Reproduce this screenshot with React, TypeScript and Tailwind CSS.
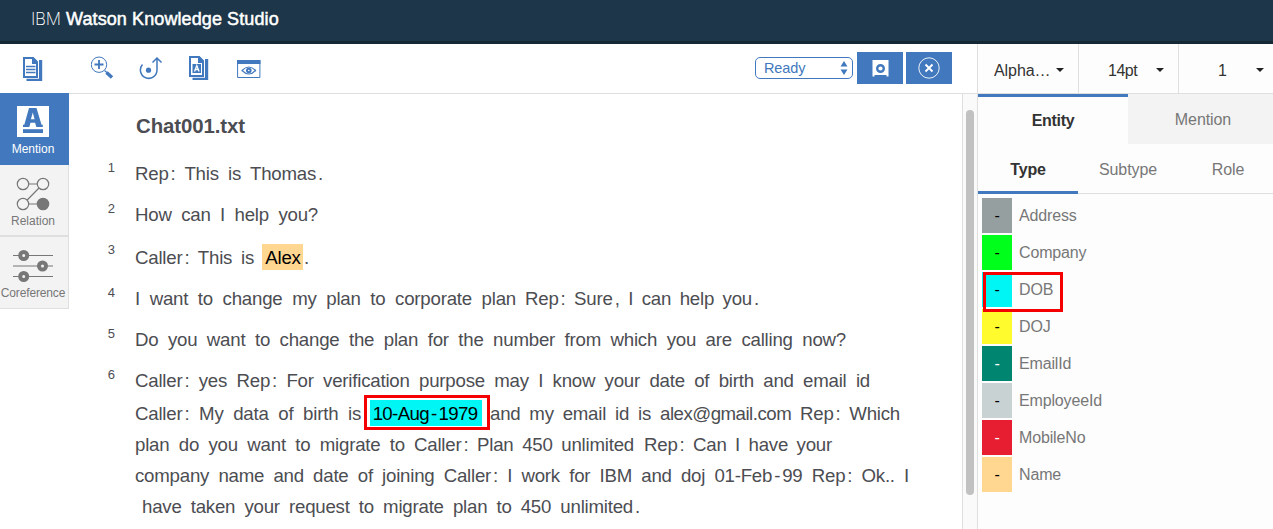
import React from "react";

const FONT = "font-['Liberation_Sans',Arial,sans-serif]";

/* Tokens such as ":" and "." carry a small leading gap. */
function Tokens({ text }: { text: string }) {
  const parts = text.split("|");
  return (
    <>
      {parts.map((p, i) => (
        <span key={i} className={i > 0 ? "ml-[2px]" : ""}>
          {p}
        </span>
      ))}
    </>
  );
}

function Run({ text, className }: { text: string; className: string }) {
  return (
    <span className={`block shrink-0 whitespace-nowrap [text-align-last:justify] ${className}`}>
      <Tokens text={text} />
    </span>
  );
}

function Sentence({ n, children }: { n: number; children: React.ReactNode }) {
  return (
    <div className="mb-[10px] flex">
      <div className="w-[46px] shrink-0 pt-[2px] text-right text-[13px] leading-[15px]">{n}</div>
      <div className="ml-[20px] text-[18.67px] leading-[31px] tracking-[-0.22px]">{children}</div>
    </div>
  );
}

function DocLines() {
  return (
    <>
      <path d="M16 3h3.200v21H3.500v-2.200H16z" fill="#4178be" />
      <path d="M1 1h8.500l4.500 4.500V20H1z" fill="#fff" stroke="#4178be" strokeWidth="2" />
      <path d="M9 0h1.500L15 4.500V7H9z" fill="#4178be" />
    </>
  );
}

const entities = [
  { name: "Address", cls: "bg-[#959f9f] text-black" },
  { name: "Company", cls: "bg-[#00ff1a] text-black" },
  { name: "DOB", cls: "bg-[#00f5f5] text-black" },
  { name: "DOJ", cls: "bg-[#fffb2d] text-black" },
  { name: "EmailId", cls: "bg-[#008571] text-white" },
  { name: "EmployeeId", cls: "bg-[#c8d2d2] text-black" },
  { name: "MobileNo", cls: "bg-[#e71d32] text-white" },
  { name: "Name", cls: "bg-[#ffd791] text-black" },
];

function Caret() {
  return (
    <svg className="-mt-[2px] block" width="8" height="4" viewBox="0 0 8 4">
      <path d="M0 0h8L4 4z" fill="#222" />
    </svg>
  );
}

export default function App() {
  return (
    <div className={`flex h-[529px] w-[1273px] flex-col overflow-hidden bg-white ${FONT} text-[#4c4d52]`}>
      <header className="flex h-[44px] shrink-0 border-b-[3px] border-[#152935] bg-[#1d3649] pl-[31px] text-[17px] leading-[38px] whitespace-nowrap text-white">
        <span className="w-[35px] font-['Inter','Liberation_Sans',sans-serif] text-[17px] font-extralight tracking-[-0.3px]">IBM</span>
        <span className="text-[18px] tracking-[0.1px] [-webkit-text-stroke:0.5px_white]">Watson Knowledge Studio</span>
      </header>

      <div className="flex min-h-0 flex-1">
        <div className="flex w-[977px] shrink-0 flex-col">
          <div className="flex h-[49px] shrink-0 items-start">
            <svg className="mt-[13px] ml-[23px] block" width="20" height="24" viewBox="0 0 20 24">
              <DocLines />
              <path d="M3 9.500h9.500M3 12.500h9.500M3 15.500h9.500" stroke="#4178be" strokeWidth="1.500" />
            </svg>
            <svg className="mt-[12px] ml-[48px] block" width="23" height="24" viewBox="0 0 23 24" fill="none" stroke="#4178be">
              <circle cx="8" cy="8.700" r="7.700" strokeWidth="1" />
              <path d="M8 4v9M3.500 8.500h9" strokeWidth="1.800" />
              <path d="M13.500 14.500l3 2.500" strokeWidth="1.200" />
              <path d="M15.500 16.500l5.500 5" strokeWidth="3.500" />
            </svg>
            <svg className="mt-[12px] ml-[25px] block" width="24" height="25" viewBox="0 0 24 25" fill="none" stroke="#4178be" strokeWidth="1.500">
              <path d="M3.500 8.500A8.300 8.300 0 1 0 18 14V2.500M13.500 6.500l4.500-4.500 4.500 4.500" />
              <circle cx="9.500" cy="14.200" r="2.600" fill="#4178be" stroke="none" />
            </svg>
            <svg className="mt-[12px] ml-[26px] block" width="20" height="24" viewBox="0 0 20 24">
              <DocLines />
              <rect x="3.500" y="8" width="8.500" height="9" fill="#4178be" />
              <path d="M5.500 15.500L7.800 9.500l2.300 6M6.300 13.500h3" stroke="#fff" strokeWidth="1.300" fill="none" />
            </svg>
            <svg className="mt-[16px] ml-[28px] block" width="24" height="18" viewBox="0 0 24 18" fill="none" stroke="#4178be">
              <path d="M.6.500h22.300v17H.6z" />
              <path d="M0 0h23.500v4H0z" fill="#4178be" stroke="none" />
              <path d="M5 10.500q6.800-7 13.600 0q-6.800 7-13.600 0z" strokeWidth="1.100" />
              <circle cx="11.800" cy="10.500" r="1.800" strokeWidth="2" />
            </svg>
            <div className="mt-[13px] ml-[494px] flex h-[22px] w-[98px] shrink-0 items-center justify-between rounded-[5px] border border-[#4178be] pt-[2px] pr-[4px] pl-[8px] text-[14.500px] tracking-[-0.1px] text-[#4178be]">
              <span>Ready</span>
              <svg className="-mt-[2px]" width="8" height="14" viewBox="0 0 8 14" fill="#4178be">
                <path d="M4 0l3.500 5.500h-7zM4 14l3.500-5.500h-7z" />
              </svg>
            </div>
            <div className="mt-[8px] ml-[4px] flex h-[32px] w-[46px] shrink-0 items-center justify-center bg-[#4178be]">
              <svg width="17" height="17" viewBox="0 0 17 17">
                <path d="M.500 0h16v16.500h-2V15h-12v1.500h-2z" fill="#fff" />
                <circle cx="8.500" cy="8.500" r="3.300" fill="none" stroke="#4178be" strokeWidth="2.400" />
              </svg>
            </div>
            <div className="mt-[8px] ml-[3px] flex h-[32px] w-[46px] shrink-0 items-center justify-center bg-[#4178be]">
              <svg width="22" height="22" viewBox="0 0 22 22" fill="none" stroke="#fff">
                <circle cx="11" cy="11" r="10.200" strokeWidth=".9" />
                <path d="M7.500 7.500l7 7M14.500 7.500l-7 7" strokeWidth="1.900" />
              </svg>
            </div>
          </div>

          <div className="flex min-h-0 flex-1">
            <nav className="flex w-[69px] shrink-0 flex-col text-center text-[12px] leading-[14px] text-[#777]">
              <div className="flex h-[72px] flex-col items-center bg-[#4178be] pr-[3px] text-white">
                <svg className="mt-[13px] block" width="32" height="31" viewBox="0 0 32 31">
                  <path d="M0 0h32v31H0z" fill="#fff" />
                  <path fillRule="evenodd" d="M12 2h7.500l5 16.800h1.300V21h-6.500l-1.200-4.200h-4.600L12.300 21H6v-2.200h1.300zM13.900 13.200h3.700L15.800 6.500z" fill="#4178be" />
                  <path d="M6 23.200h20v3.800H6z" fill="#4178be" />
                </svg>
                <span className="mt-[5px]">Mention</span>
              </div>
              <div className="flex h-[72px] flex-col items-center border-r border-b-2 border-[#dfdfdf] bg-[#f3f3f3] pr-[2px]">
                <svg className="mt-[12px] block" width="34" height="34" viewBox="0 0 34 34" fill="none" stroke="#777" strokeWidth="1.200">
                  <circle cx="7" cy="7" r="5.700" />
                  <circle cx="27" cy="7" r="5.700" />
                  <circle cx="7" cy="27" r="5.700" />
                  <circle cx="27" cy="27" r="5.700" fill="#777" />
                  <path d="M12.700 7h8.600M12.700 27h8.600M11.200 23L23 11" />
                </svg>
                <span className="mt-[3px]">Relation</span>
              </div>
              <div className="flex h-[72px] flex-col items-center border-r border-b border-[#dfdfdf] bg-[#f3f3f3] pr-[2px]">
                <svg className="mt-[12px] block" width="40" height="34" viewBox="0 0 40 34" fill="none" stroke="#777">
                  <path d="M0 6.500h40M0 17h40M0 27.500h40" strokeWidth="1.200" />
                  <circle cx="10.700" cy="6.500" r="3.500" strokeWidth="4" fill="#f3f3f3" />
                  <circle cx="29.500" cy="17" r="3.500" strokeWidth="4" fill="#f3f3f3" />
                  <circle cx="10.700" cy="27.500" r="3.500" strokeWidth="4" fill="#f3f3f3" />
                </svg>
                <span className="mt-[3px] tracking-[-0.15px]">Coreference</span>
              </div>
            </nav>

            <main className="min-w-0 flex-1 border-t border-[#dfdfdf]">
              <h1 className="pt-[19px] pl-[67px] text-[20.400px] leading-[26px] font-bold tracking-[-0.1px]">Chat001.txt</h1>
              <div className="pt-[19px]">
                <Sentence n={1}>
                  <Run className="w-[188px]" text="Rep|: This is Thomas|." />
                </Sentence>
                <Sentence n={2}>
                  <Run className="w-[183px]" text="How can I help you?" />
                </Sentence>
                <Sentence n={3}>
                  <div className="flex h-[33px] items-center pt-[1px]">
                    <Run className="w-[119px] pt-[1px]" text="Caller|: This is" />
                    <span className="mr-[1px] ml-[8px] flex h-[26px] w-[41px] items-center justify-center bg-[#ffd791] pl-[1px] text-black">Alex</span>
                    <span className="pt-[1px]">.</span>
                  </div>
                </Sentence>
                <Sentence n={4}>
                  <div className="flex gap-[9px]">
                    <Run className="w-[381px]" text="I want to change my plan to corporate plan" />
                    <Run className="w-[234px]" text="Rep|: Sure|, I can help you|." />
                  </div>
                </Sentence>
                <Sentence n={5}>
                  <Run className="w-[711px]" text="Do you want to change the plan for the number from which you are calling now?" />
                </Sentence>
                <Sentence n={6}>
                  <Run className="w-[735px]" text="Caller|: yes Rep|: For verification purpose may I know your date of birth and email id" />
                  <div className="flex h-[33px] items-center pt-[1px]">
                    <Run className="w-[226px] pt-[1px]" text="Caller|: My data of birth is" />
                    <span className="relative mr-[8px] ml-[9px] flex h-[26px] w-[112px] items-center justify-center bg-[#00f5f5] pr-[2px] tracking-[-0.65px] whitespace-nowrap text-black">
                      <span>
                        <Tokens text="10-Aug|-|1979" />
                      </span>
                      <span className="absolute -top-[5px] -left-[6px] h-[35px] w-[126px] border-[3px] border-[#f50000]" />
                    </span>
                    <Run className="w-[161px] pt-[1px]" text="and my email id is" />
                    <span className="ml-[9px] w-[131px] pt-[1px] tracking-[-0.5px] whitespace-nowrap">alex@gmail.com</span>
                    <Run className="ml-[9px] w-[100px] pt-[1px]" text="Rep|: Which" />
                  </div>
                  <div className="flex">
                    <Run className="w-[270px]" text="plan do you want to migrate to" />
                    <Run className="ml-[9px] w-[220px]" text="Caller|: Plan 450 unlimited" />
                    <Run className="ml-[10px] w-[188px]" text="Rep|: Can I have your" />
                  </div>
                  <Run className="w-[774px]" text="company name and date of joining Caller|: I work for IBM and doj 01-Feb|-|99 Rep|: Ok.. I" />
                  <Run className="ml-[7px] w-[498px]" text="have taken your request to migrate plan to 450 unlimited|." />
                </Sentence>
              </div>
            </main>

            <div className="w-[15px] shrink-0 border-t border-l border-[#dfdfdf] bg-[#fafafa] pt-[16px] pl-[3px]">
              <div className="h-[385px] w-[8px] rounded-full bg-[#c1c1c1]" />
            </div>
          </div>
        </div>

        <aside className="flex w-[296px] shrink-0 flex-col border-l border-[#dfdfdf] bg-[#fdfdfd] text-[16px] tracking-[-0.08px] text-[#777]">
          <div className="flex h-[50px] shrink-0 border-b border-[#dfdfdf] text-[#333]">
            <div className="flex w-[101px] items-center justify-between border-r border-[#dfdfdf] pt-[4px] pr-[14px] pl-[16px]">
              <span>Alpha…</span>
              <Caret />
            </div>
            <div className="flex w-[100px] items-center border-r border-[#dfdfdf] pt-[4px] pr-[14px] pl-[29px]">
              <span className="grow tracking-[-0.500px]">14pt</span>
              <Caret />
            </div>
            <div className="flex flex-1 items-center pt-[4px] pr-[9px] pl-[39px]">
              <span className="grow">1</span>
              <Caret />
            </div>
          </div>
          <div className="flex h-[50px] shrink-0">
            <div className="w-[150px] border-t-[3px] border-[#4178be] text-center leading-[47px] font-bold tracking-[-0.3px] text-[#333]">Entity</div>
            <div className="flex-1 bg-[#f3f3f3] pl-[5px] text-center leading-[51px]">Mention</div>
          </div>
          <div className="flex h-[50px] shrink-0 text-center leading-[52px]">
            <div className="w-[100px] border-b-[3px] border-[#4178be] font-bold tracking-[-0.2px] text-[#333]">Type</div>
            <div className="w-[100px] border-b border-[#dfdfdf]">Subtype</div>
            <div className="flex-1 border-b border-[#dfdfdf] pl-[5px]">Role</div>
          </div>
          <ul className="relative flex flex-col gap-[2px] pt-[4px] pl-[4px]">
            {entities.map((e) => (
              <li key={e.name} className="flex h-[35px] leading-[36px]">
                <span className={`w-[30px] text-center ${e.cls}`}>-</span>
                <span className="ml-[7px] tracking-[-0.15px]">{e.name}</span>
              </li>
            ))}
            <li aria-hidden="true" className="absolute top-[78px] left-[5px] h-[40px] w-[80px] border-[3px] border-[#f50000]" />
          </ul>
        </aside>
      </div>
    </div>
  );
}
